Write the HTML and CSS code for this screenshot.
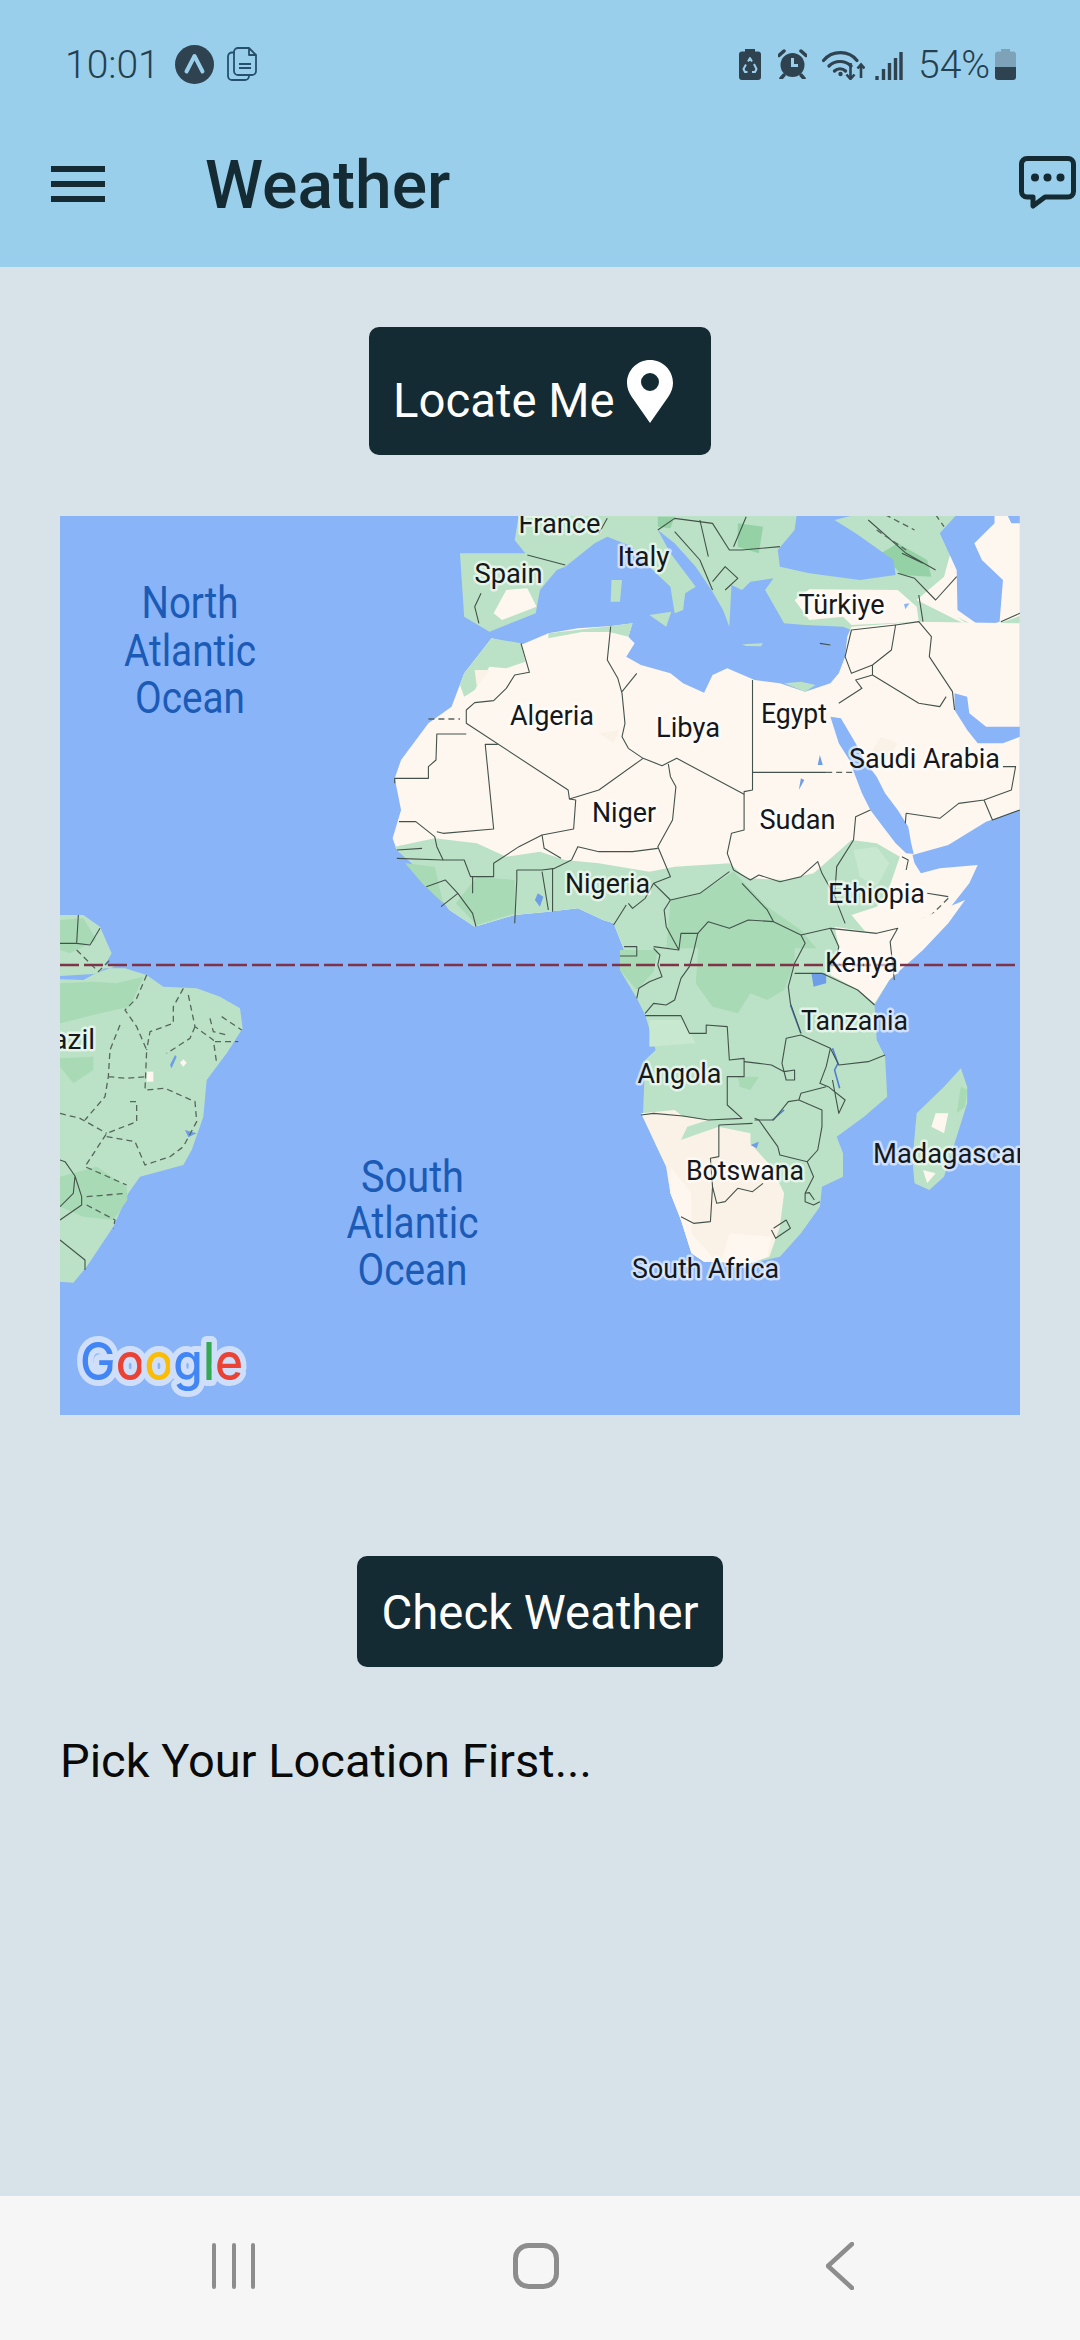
FILE: index.html
```html
<!DOCTYPE html>
<html lang="en">
<head>
<meta charset="utf-8">
<title>Weather</title>
<link rel="stylesheet" href="styles.css">
</head>
<body>
<div class="screen">
  <header class="app-header">
    <div class="status">
      <div class="status-left">
        <span class="clock">10:01</span>
        <svg class="ic-expo" viewBox="0 0 39 39"><circle cx="19.5" cy="19.5" r="19.5" class="f-dark"/><path d="M11.5 26.5 19.5 11l8 15.5" class="s-header"/></svg>
        <svg class="ic-doc" viewBox="0 0 30 34"><path d="M8 5.5H5a4 4 0 0 0-4 4V29a4 4 0 0 0 4 4h13a4 4 0 0 0 4-4v-1" class="s-thin"/><path d="M11 1h11l7 7v16a4 4 0 0 1-4 4H11a4 4 0 0 1-4-4V5a4 4 0 0 1 4-4zM22 1v7h7M12 17h12M12 21h12" class="s-thin"/></svg>
      </div>
      <div class="status-right">
        <svg class="ic-recycle" viewBox="0 0 22 31"><path d="M6 0h10v2.500h3a3 3 0 0 1 3 3V28a3 3 0 0 1-3 3H3a3 3 0 0 1-3-3V5.500a3 3 0 0 1 3-3h3z" class="f-dark"/><path d="M9 12.500 11 9l2 3.500M15 15l2.500 5-1.500 3h-3M8.500 23H6l-1.500-3L7 15.500" class="s-recycle"/></svg>
        <svg class="ic-alarm" viewBox="0 0 29 30"><circle cx="14.500" cy="16" r="12" class="f-dark"/><path d="M1 6.500 6 2M28 6.500 23 2M6 26l-3 3.500M23 26l3 3.500" class="s-icon"/><path d="M14.500 9v7.500H20" class="s-hands"/></svg>
        <svg class="ic-wifi" viewBox="0 0 43 31"><path d="M1.500 11.500C10 1 27 1 35 11.500M7 17c6-6 16-6 22 0M12.500 22c3-3 8-3 11 0" class="s-wifi"/><circle cx="18.500" cy="25" r="2.200" class="f-dark"/><path d="M28.500 14v15.500M24.500 25.500l4 4.500 4-4.500M39 29V16M35.500 19.500 39 15.500l3.500 4" class="s-arrow"/></svg>
        <svg class="ic-signal" viewBox="0 0 28 28"><path d="M2 28v-4M8.500 28V17M14.500 28V11M20.500 28V6M26 28V0" class="s-signal"/></svg>
        <span class="battery-pct">54%</span>
        <svg class="ic-battery" viewBox="0 0 21 31"><path d="M6 0h9v2.500h3a3 3 0 0 1 3 3V18H0V5.500a3 3 0 0 1 3-3h3z" class="f-batt-empty"/><path d="M0 18h21v10a3 3 0 0 1-3 3H3a3 3 0 0 1-3-3z" class="f-dark"/></svg>
      </div>
    </div>
    <div class="title-row">
      <div class="burger"><span></span><span></span><span></span></div>
      <h1 class="title">Weather</h1>
      <svg class="ic-chat" viewBox="0 0 57 56"><path d="M8 2.500H49A5.500 5.500 0 0 1 54.500 8V35.500A5.500 5.500 0 0 1 49 41H26L14 50V41H8A5.500 5.500 0 0 1 2.500 35.500V8A5.500 5.500 0 0 1 8 2.500z" class="s-chat"/><circle cx="16" cy="21.500" r="4" class="f-ink"/><circle cx="28.500" cy="21.500" r="4" class="f-ink"/><circle cx="41.500" cy="21.500" r="4" class="f-ink"/></svg>
    </div>
  </header>

  <main class="content">
    <button class="btn btn-locate">
      <span class="btn-locate-text">Locate Me</span>
      <svg class="ic-pin" viewBox="0 0 46 63"><path fill-rule="evenodd" d="M23 0C10.300 0 0 10.300 0 23c0 5 2 9.500 4.500 13.500L23 63l18.500-26.500C44 32.500 46 28 46 23 46 10.300 35.700 0 23 0zm0 13a9 9 0 1 1 0 18 9 9 0 0 1 0-18z" class="f-white"/></svg>
    </button>

    <svg class="map" viewBox="60 516 960 899">
      <rect x="60" y="516" width="960" height="899" class="m-ocean"/>

      <g transform="matrix(.42092 0 0 .33333 380 510)">
        <path class="m-green" d="M330,14 L1520,14 L1520,340 L1280,340 L1120,360 L1100,350 L1010,345 L960,340 L915,240 L935,205 L880,215 L860,240 L835,225 L830,350 L815,300 L790,245 L750,170 L700,100 L660,60 L690,130 L750,230 L725,250 L720,300 L700,310 L690,230 L640,170 L600,110 L540,80 L510,100 L440,170 L420,180 L380,240 L370,310 L260,365 L200,320 L190,130 L345,130 L320,90Z"/>
        <path class="m-beige" d="M300,240 L350,235 L372,290 L290,330 L270,310Z"/>
        <path class="m-beige" d="M985,270 L1020,238 L1230,240 L1275,290 L1280,335 L1120,345 L1100,320 L1020,330Z"/>
        <path class="m-beige" d="M1275,270 L1340,200 L1380,14 L1520,14 L1520,340 L1440,370 L1370,330Z"/>
        <path class="m-green" d="M1370,320 L1430,358 L1520,318 L1520,340 L1440,378Z"/>
        <path class="m-dark" d="M1190,130 L1230,100 L1300,150 L1310,200 L1240,195Z"/>
        <path class="m-dark" d="M660,20 L700,20 L690,55 L660,50Z"/>
        <path class="m-dark" d="M850,40 L910,50 L900,130 L850,110Z"/>
        <path class="m-ocean" d="M990,14 L1130,14 L1080,30 L1130,70 L1220,150 L1225,195 L1140,210 L1020,190 L950,170 L945,120 L985,60Z"/>
        <path class="m-ocean" d="M1370,14 L1330,70 L1370,180 L1372,300 L1430,352 L1472,335 L1480,210 L1430,150 L1412,100 L1460,40 L1460,14Z"/>
        <path class="m-ocean" d="M1490,14 L1520,14 L1520,40 L1500,40Z"/>
        <path class="m-green" d="M640,315 L692,305 L680,350Z"/>
        <path class="m-green" d="M550,210 L575,210 L570,275 L548,275Z"/>
        <path class="m-green" d="M860,403 L910,400 L905,409 L870,408Z"/>

        <path class="m-beige" d="M265,385 L300,395 L340,402 L400,370 L470,355 L550,348 L600,340 L590,380 L605,400 L585,440 L620,465 L690,490 L720,520 L770,548 L790,495 L825,475 L890,510 L950,520 L1010,545 L1070,520 L1090,490 L1105,440 L1110,380 L1120,350 L1280,335 L1520,340 L1520,900 L1440,935 L1350,1005 L1265,1035 L1270,1060 L1285,1090 L1330,1075 L1420,1065 L1400,1120 L1350,1200 L1290,1260 L1270,1320 L580,1320 L555,1240 L530,1230 L470,1195 L400,1205 L320,1215 L225,1250 L165,1200 L130,1140 L90,1075 L40,1020 L30,985 L50,900 L35,805 L50,750 L115,640 L170,590 L200,490Z"/>
        <path class="m-ocean" d="M1365,550 L1395,560 L1400,610 L1440,650 L1520,650 L1520,680 L1480,700 L1420,700 L1395,660 L1365,600Z"/>
        <path class="m-ocean" d="M1070,620 L1095,625 L1130,700 L1150,750 L1180,800 L1200,850 L1230,900 L1255,950 L1262,1000 L1268,1032 L1250,1030 L1225,1000 L1195,950 L1165,900 L1145,850 L1130,800 L1115,750 L1090,700Z"/>
        <path class="m-green" d="M200,490 L265,385 L335,400 L345,455 L300,475 L260,470 L225,540 L200,560 L190,525Z"/>
        <path class="m-green" d="M400,370 L550,348 L600,340 L590,380 L545,366 L480,366 L400,385Z"/>
        <path class="m-green" d="M960,520 L1010,545 L1035,525 L1000,515Z"/>
        <path class="m-green" d="M35,1010 L130,985 L230,1000 L300,1040 L380,1025 L440,1050 L520,1060 L640,1085 L700,1070 L830,1060 L870,1105 L960,1110 L1030,1090 L1075,1040 L1120,990 L1180,1000 L1235,1040 L1205,1150 L1180,1190 L1120,1215 L1150,1260 L1200,1320 L580,1320 L555,1240 L530,1230 L470,1195 L400,1205 L320,1215 L225,1250 L165,1200 L130,1140 L90,1075 L40,1020Z"/>
        <path class="m-mid" d="M690,1170 L760,1150 L840,1085 L920,1190 L1000,1260 L1040,1320 L680,1320Z"/>
        <path class="m-mid" d="M230,1100 L320,1110 L320,1210 L230,1245 L180,1180Z"/>
        <path class="m-mid" d="M60,1060 L130,1070 L150,1180 L100,1120Z"/>
        <path class="m-pale" d="M1125,1020 L1180,1010 L1210,1060 L1180,1130 L1140,1100Z"/>
        <path class="m-sand" d="M225,480 L260,480 L230,530Z"/>
        <path class="m-sand" d="M520,670 L570,660 L555,700Z"/>
        <path class="m-sand" d="M1190,680 L1230,700 L1200,760 L1170,720Z"/>
        <path class="m-lake" d="M375,1150 L388,1160 L380,1190 L368,1170Z"/>
        <path class="m-lake" d="M1045,735 L1052,765 L1040,765Z"/>
        <path class="m-lake" d="M1000,805 L1008,810 L995,840Z"/>
        <path class="m-ocean" d="M1245,282 L1258,280 L1248,298Z"/>

        <g class="m-borders">
          <path d="M335,400 355,487 320,495 300,535 270,572 225,578 205,600 205,640 447,840 450,867 520,840 625,745"/>
          <path d="M548,350 540,450 565,505 575,550 582,640 575,680 590,715 625,745 670,767 705,745 865,853"/>
          <path d="M575,545 610,490 M885,510 885,840 865,845 865,960 835,970 825,1030 840,1080"/>
          <path d="M885,787 1060,787"/>
          <path d="M685,762 690,800 703,830 695,930 660,1010 690,1100 650,1120 690,1170"/>
          <path d="M660,1015 600,1025 520,1025 470,1010 455,1050"/>
          <path d="M450,867 465,870 460,957 385,975 390,1015 430,1045"/>
          <path d="M280,703 250,703 270,957 150,970 135,965"/>
          <path d="M205,672 135,672 133,750 115,770 115,805 35,805 35,820"/>
          <path d="M45,935 85,935 130,980 135,1010 150,1050 200,1050 215,1100 270,1100 270,1060 330,1010 385,975"/>
          <path d="M40,1020 100,1015 M40,1045 150,1050"/>
          <path d="M325,1080 325,1110 320,1240 M325,1080 385,1080 415,1075 455,1050"/>
          <path d="M385,1085 400,1200 M410,1075 410,1205"/>
          <path d="M110,1130 155,1110 185,1150 145,1190 M185,1150 220,1210 228,1250 M220,1100 220,1150"/>
          <path d="M840,1080 880,1110 900,1095 950,1115 1000,1100 1040,1055 1050,1090 1085,1170"/>
          <path d="M1165,900 1130,920 1125,990 1085,1070 1080,1160 1105,1240"/>
          <path d="M690,1170 760,1150 830,1085 M860,1120 920,1200 935,1235"/>
          <path d="M590,1180 600,1195 630,1165 650,1120"/>
          <path d="M1090,580 1145,535 1130,510 1170,495 1170,465 1120,490 1105,440 1120,360 1225,345 1215,420 1170,465"/>
          <path d="M1225,345 1280,335 1310,380 1305,440 1360,545 1365,600 M1170,495 1280,580 1330,590 1345,560"/>
          <path d="M1250,910 1330,925 1375,880 1435,870 1500,840 1510,770 1480,770 M1435,870 1455,930 1520,900 M1250,910 1248,940"/>
          <path d="M1280,255 1290,335 M1370,200 1320,270 1270,205 1230,190 M1475,335 1520,310"/>
          <path d="M240,250 225,290 235,340 M350,135 440,165 M520,70 540,25"/>
          <path d="M660,60 700,25 790,40 830,120 860,120 950,110 M700,65 760,150 790,240 M790,215 820,170 850,205 820,240"/>
          <path d="M760,30 780,140 M870,20 840,110 M1160,30 1250,130 1320,180 M1240,130 1290,160"/>
          <path d="M1240,1040 1255,1050 1250,1080 M1350,1160 1300,1150"/>
          <path d="M1045,400 1070,405"/>
        </g>
        <g class="m-borders-dash">
          <path d="M115,627 190,627 M1060,787 1130,787"/>
          <path d="M1350,1165 1310,1215 1250,1250 1230,1270"/>
          <path d="M1180,60 1250,120 M1320,14 1340,50 M1200,14 1270,60"/>
        </g>
      </g>

      <g transform="matrix(.42092 0 0 .33333 380 900)">
        <path class="m-green" d="M580,145 L570,210 L610,295 L630,345 L655,450 L630,480 L625,640 L650,720 L680,800 L690,880 L715,960 L740,1060 L770,1085 L880,1090 L950,1070 L1000,1000 L1045,920 L1050,860 L1100,830 L1100,760 L1085,710 L1150,650 L1205,590 L1200,470 L1180,420 L1175,315 L1210,240 L1250,170 L1275,145Z"/>
        <path class="m-beige" d="M1080,80 L1180,100 L1230,85 L1390,0 L1350,70 L1290,150 L1210,240 L1175,310 L1130,265 L1070,225 L1090,140Z"/>
        <path class="m-sand" d="M620,640 L700,630 L720,650 L780,660 L730,680 L715,720 L760,700 L805,680 L880,700 L880,730 L930,800 L960,880 L950,980 L925,1070 L880,1090 L770,1085 L740,1060 L715,960 L690,880 L680,800 L650,720Z"/>
        <path class="m-beige" d="M690,800 L740,880 L740,1000 L800,1085 L770,1085 L740,1060 L715,960 L690,880Z"/>
        <path class="m-beige" d="M830,1000 L930,1010 L920,1070 L880,1090 L810,1085Z"/>
        <path class="m-mid" d="M760,90 L880,65 L985,110 L985,190 L960,270 L920,300 L880,280 L850,340 L790,320 L750,250Z"/>
        <path class="m-mid" d="M570,150 L660,150 L650,215 L610,270 L570,210Z"/>
        <path class="m-mid" d="M850,530 L900,530 L880,570 L855,560Z"/>
        <path class="m-pale" d="M640,360 L720,360 L750,430 L640,440Z"/>
        <path class="m-green" d="M1380,505 L1395,560 L1395,610 L1340,830 L1305,870 L1270,850 L1265,780 L1275,640 L1340,560Z"/>
        <path class="m-mid" d="M1380,560 L1395,570 L1390,620 L1370,640Z"/>
        <path class="m-beige" d="M1320,640 L1350,640 L1340,700 L1310,680Z"/>
        <path class="m-beige" d="M1290,810 L1320,820 L1300,850Z"/>
        <path class="m-lake" d="M1025,220 L1060,220 L1060,250 L1030,260Z"/>
        <path class="m-lake" d="M880,735 L900,725 L895,745Z"/>
        <path class="m-lake-line" d="M975,315 1000,400 M1075,445 1088,490 1080,510 1092,565 M932,660 960,630"/>
        <g class="m-borders">
          <path d="M555,75 585,15 M690,0 675,30 680,80 710,150 715,100 755,100 745,155 735,200 715,235 700,300 680,315 650,310 630,340"/>
          <path d="M580,140 610,140 610,168 570,168 M650,140 710,150 M650,145 665,165 660,195 670,230 640,245 615,265 610,295"/>
          <path d="M675,30 M755,100 780,65 830,85 875,60 935,65 1000,105 1070,85 1090,140 1085,170"/>
          <path d="M1000,105 1010,130 985,190 970,260 975,310 1000,400 M985,220 1050,220 1135,270 1175,315"/>
          <path d="M1070,85 1180,100 1230,85 1212,125 1222,240"/>
          <path d="M630,347 715,347 735,400 775,400 775,375 825,380 830,480 865,475 865,530 825,530 825,615 860,655 780,660 720,648 650,640 620,645"/>
          <path d="M865,485 900,490 930,495 960,515 985,510 985,540 965,540 955,490 965,415 1000,405 1070,445 1090,495 1160,485 1200,465"/>
          <path d="M1070,445 1060,500 1045,550 1065,560 1105,600 1090,640 1075,540"/>
          <path d="M1060,560 1000,580 995,600 1050,630 1050,680 1040,750 1015,785 950,765 945,740 900,660 890,655"/>
          <path d="M995,600 970,605 935,660 890,660 M805,675 885,670 M805,675 805,770 785,775 790,860 800,910 820,905 850,865 885,875 910,850"/>
          <path d="M790,860 785,965 745,970 715,950 M1015,785 1030,830 1010,880 1010,905 1030,915 1045,905 M1010,880 1020,878 1032,900"/>
          <path d="M935,985 965,960 975,985 940,1015 930,990"/>
        </g>
      </g>

      <g transform="matrix(.33333 0 0 .33333 50 900)">
        <path class="m-green" d="M30,45 L100,45 L150,80 L185,160 L165,195 L225,205 L290,225 L340,260 L440,265 L510,290 L570,325 L578,385 L530,460 L470,540 L460,650 L425,750 L400,795 L270,830 L235,880 L190,980 L110,1100 L70,1148 L30,1145Z"/>
        <path class="m-ocean" d="M30,238 L100,240 L165,205 L225,205 L200,198 L130,222 L30,228Z"/>
        <path class="m-mid" d="M30,250 L130,245 L200,250 L280,230 L240,320 L150,340 L30,370Z"/>
        <path class="m-mid" d="M30,60 L100,55 L140,120 L60,160 L30,150Z"/>
        <path class="m-mid" d="M30,475 L130,470 L130,510 L70,550 L30,500Z"/>
        <path class="m-mid" d="M30,830 L140,800 L230,860 L232,900 L190,960 L100,950 L30,920Z"/>
        <path class="m-lake" d="M375,465 L380,470 L365,505 L360,495Z"/>
        <path class="m-lake" d="M405,690 L440,700 L415,712Z"/>
        <path class="m-beige" d="M400,478 L410,488 L400,500 L390,488Z"/>
        <path class="m-beige" d="M290,515 L310,515 L310,545 L290,545Z"/>
        <g class="m-borders">
          <path d="M30,780 45,785 75,828 95,890 95,915 30,960 M75,828 70,880 30,920 M30,1020 105,1080 105,1110"/>
          <path d="M85,45 80,130 30,130 M120,135 150,85 M80,130 120,135"/>
        </g>
        <g class="m-borders-dash">
          <path d="M290,225 260,295 225,330 260,380 290,450 285,570 345,565 435,605 440,665 400,740"/>
          <path d="M210,375 180,450 175,530 165,590 105,660 M175,530 230,535 290,530"/>
          <path d="M400,265 370,320 370,370 300,395 290,450 M415,285 435,380 490,420 500,490"/>
          <path d="M435,380 420,415 350,460 M495,425 565,425 M480,355 490,395 530,405 M515,350 575,390"/>
          <path d="M240,605 260,605 260,665 170,700 105,800 230,855 M170,710 255,725 285,795 360,770 400,740"/>
          <path d="M30,640 90,655 170,700 M110,890 230,880 M110,915 195,960 190,985 M80,150 145,215 185,175"/>
        </g>
      </g>

      <path d="M60 965H1020" class="m-equator"/>

      <text class="lbl-ocean" x="190" y="618" textLength="97" lengthAdjust="spacingAndGlyphs">North</text>
      <text class="lbl-ocean" x="190" y="666" textLength="132" lengthAdjust="spacingAndGlyphs">Atlantic</text>
      <text class="lbl-ocean" x="190" y="713" textLength="110" lengthAdjust="spacingAndGlyphs">Ocean</text>
      <text class="lbl-ocean" x="412.500" y="1192" textLength="103" lengthAdjust="spacingAndGlyphs">South</text>
      <text class="lbl-ocean" x="412.500" y="1238" textLength="132" lengthAdjust="spacingAndGlyphs">Atlantic</text>
      <text class="lbl-ocean" x="412.500" y="1285" textLength="110" lengthAdjust="spacingAndGlyphs">Ocean</text>

      <text class="lbl" x="518.500" y="533" textLength="82" lengthAdjust="spacingAndGlyphs">France</text>
      <text class="lbl" x="617.500" y="566" textLength="52" lengthAdjust="spacingAndGlyphs">Italy</text>
      <text class="lbl" x="474.500" y="583" textLength="68" lengthAdjust="spacingAndGlyphs">Spain</text>
      <text class="lbl" x="798.500" y="614" textLength="86" lengthAdjust="spacingAndGlyphs">Türkiye</text>
      <text class="lbl" x="510" y="725" textLength="84" lengthAdjust="spacingAndGlyphs">Algeria</text>
      <text class="lbl" x="656" y="737" textLength="64" lengthAdjust="spacingAndGlyphs">Libya</text>
      <text class="lbl" x="761" y="723" textLength="66" lengthAdjust="spacingAndGlyphs">Egypt</text>
      <text class="lbl" x="849" y="768" textLength="151" lengthAdjust="spacingAndGlyphs">Saudi Arabia</text>
      <text class="lbl" x="592" y="822" textLength="64" lengthAdjust="spacingAndGlyphs">Niger</text>
      <text class="lbl" x="759.500" y="829" textLength="76" lengthAdjust="spacingAndGlyphs">Sudan</text>
      <text class="lbl" x="565" y="893" textLength="85" lengthAdjust="spacingAndGlyphs">Nigeria</text>
      <text class="lbl" x="828" y="903" textLength="97" lengthAdjust="spacingAndGlyphs">Ethiopia</text>
      <text class="lbl" x="825" y="972" textLength="73" lengthAdjust="spacingAndGlyphs">Kenya</text>
      <text class="lbl" x="801" y="1030" textLength="107" lengthAdjust="spacingAndGlyphs">Tanzania</text>
      <text class="lbl" x="637.500" y="1083" textLength="84" lengthAdjust="spacingAndGlyphs">Angola</text>
      <text class="lbl" x="873" y="1163" textLength="152" lengthAdjust="spacingAndGlyphs">Madagascar</text>
      <text class="lbl" x="686" y="1180" textLength="118" lengthAdjust="spacingAndGlyphs">Botswana</text>
      <text class="lbl" x="632" y="1278" textLength="147" lengthAdjust="spacingAndGlyphs">South Africa</text>
      <text class="lbl" x="26" y="1049" textLength="69" lengthAdjust="spacingAndGlyphs">Brazil</text>

      <text class="google" x="80" y="1380" textLength="163" lengthAdjust="spacingAndGlyphs"><tspan class="g-blue">G</tspan><tspan class="g-red">o</tspan><tspan class="g-yellow">o</tspan><tspan class="g-blue">g</tspan><tspan class="g-green">l</tspan><tspan class="g-red">e</tspan></text>
    </svg>

    <button class="btn btn-weather">Check Weather</button>
    <p class="hint">Pick Your Location First...</p>
  </main>

  <nav class="navbar">
    <svg class="ic-recents" viewBox="0 0 44 46"><path d="M2 2V44M22 2V44M41 2V44" class="s-nav"/></svg>
    <svg class="ic-home" viewBox="0 0 46 46"><rect x="2.500" y="2.500" width="41" height="41" rx="13" class="s-nav-home"/></svg>
    <svg class="ic-back" viewBox="0 0 28 48"><path d="M26 2 2 24 26 46" class="s-nav-back"/></svg>
  </nav>
</div>
</body>
</html>
```
FILE: styles.css
```css
* { box-sizing: border-box; }
html, body { margin: 0; padding: 0; }
body { font-family: Roboto, "Liberation Sans", sans-serif; background: #d8e3e9; }
.screen { width: 1080px; height: 2340px; display: flex; flex-direction: column; overflow: hidden; }

.app-header { background: #9acfec; height: 267px; flex: none; color: #152b34; }
.status { height: 128px; padding: 0 64px 0 65px; display: flex; justify-content: space-between; align-items: center; color: #24404f; }
.status-left, .status-right { display: flex; align-items: center; }
.clock { font-size: 39px; font-weight: 300; line-height: 40px; padding-top: 2px; width: 90px; white-space: nowrap; }
.ic-expo { width: 39px; height: 39px; margin-left: 20px; }
.ic-doc { width: 30px; height: 34px; margin-left: 13px; }
.ic-recycle { width: 22px; height: 31px; }
.ic-alarm { width: 29px; height: 30px; margin-left: 17px; }
.ic-wifi { width: 43px; height: 31px; margin-left: 15px; }
.ic-signal { width: 28px; height: 28px; margin-left: 10px; margin-top: 3px; }
.battery-pct { font-size: 39px; font-weight: 300; line-height: 40px; padding-top: 2px; margin-left: 15px; width: 70px; white-space: nowrap; }
.ic-battery { width: 21px; height: 31px; margin-left: 7px; }

.f-dark { fill: #2f4250; }
.f-ink { fill: #152b34; }
.f-white { fill: #fff; }
.f-batt-empty { fill: #7ea3b9; }
.s-header { fill: none; stroke: #9acfec; stroke-width: 4; stroke-linecap: round; stroke-linejoin: round; }
.s-thin { fill: none; stroke: #24506b; stroke-width: 1.8; stroke-linejoin: round; }
.s-recycle { fill: none; stroke: #9acfec; stroke-width: 2; stroke-linejoin: round; }
.s-icon { fill: none; stroke: #2f4250; stroke-width: 3.500; stroke-linecap: round; }
.s-hands { fill: none; stroke: #9acfec; stroke-width: 3; }
.s-wifi { fill: none; stroke: #2f4250; stroke-width: 3.200; stroke-linecap: round; }
.s-arrow { fill: none; stroke: #2f4250; stroke-width: 2.600; }
.s-signal { fill: none; stroke: #2f4250; stroke-width: 3.400; }
.s-chat { fill: none; stroke: #152b34; stroke-width: 5; stroke-linejoin: round; }

.title-row { height: 112px; padding: 0 4px 0 51px; display: flex; align-items: center; }
.burger { width: 54px; height: 36px; display: flex; flex-direction: column; justify-content: space-between; flex: none; }
.burger span { display: block; height: 6px; background: #152b34; }
.title { margin: 0 0 0 100px; font-size: 66px; font-weight: 500; line-height: 76px; padding-top: 3px; white-space: nowrap; }
.ic-chat { width: 57px; height: 56px; margin-left: auto; }

.content { flex: 1; display: flex; flex-direction: column; align-items: center; padding-top: 60px; background: #d8e3e9; }
.btn { border: 0; border-radius: 10px; background: #152b34; color: #fff; font-family: inherit; font-size: 47.300px; font-weight: 400; }
.btn-locate { width: 342px; height: 128px; padding: 0 38px 0 24px; display: flex; align-items: center; justify-content: space-between; }
.btn-locate-text { margin-top: 20px; white-space: nowrap; }
.ic-pin { width: 46px; height: 63px; }
.map { display: block; width: 960px; height: 899px; margin-top: 61px; flex: none; }
.btn-weather { width: 366px; height: 111px; margin-top: 141px; padding: 2px 0 0; white-space: nowrap; }
.hint { align-self: flex-start; margin: 67px 0 0 60px; font-size: 47px; line-height: 54px; color: #0a0a0a; white-space: nowrap; }

.navbar { height: 144px; flex: none; background: #f6f6f6; position: relative; }
.s-nav { fill: none; stroke: #8d8d8d; stroke-width: 4; stroke-linecap: round; }
.s-nav-home { fill: none; stroke: #8d8d8d; stroke-width: 5; }
.s-nav-back { fill: none; stroke: #8d8d8d; stroke-width: 4.500; stroke-linecap: round; stroke-linejoin: round; }
.ic-recents, .ic-home, .ic-back { position: absolute; top: 47px; }
.ic-recents { left: 212px; width: 44px; height: 46px; }
.ic-home { left: 513px; width: 46px; height: 46px; }
.ic-back { left: 826px; top: 46px; width: 28px; height: 48px; }

.m-ocean { fill: #8ab4f8; }
.m-green { fill: #bbe2c6; }
.m-mid { fill: #a8dab5; }
.m-dark { fill: #94d2a5; }
.m-pale { fill: #c8e8d0; }
.m-beige { fill: #fef7f0; }
.m-sand { fill: #faf2e6; }
.m-lake { fill: #6f9ee8; }
.m-lake-line { fill: none; stroke: #4f7fd6; stroke-width: 1.600; vector-effect: non-scaling-stroke; }
.m-borders path { fill: none; stroke: #43524a; stroke-width: 1.100; stroke-linejoin: round; vector-effect: non-scaling-stroke; }
.m-borders-dash path { fill: none; stroke: #56665c; stroke-width: 1.300; stroke-dasharray: 6 4; vector-effect: non-scaling-stroke; }
.m-equator { fill: none; stroke: #7f3349; stroke-width: 2.400; stroke-dasharray: 19 5; }
.lbl { font-family: Roboto, sans-serif; font-size: 28px; fill: #14181c; stroke: rgba(255,255,255,.62); stroke-width: 5px; paint-order: stroke; stroke-linejoin: round; }
.lbl-ocean { font-family: Roboto, sans-serif; font-size: 44px; fill: #1b5bb6; text-anchor: middle; }
.google { font-family: Inter, Roboto, sans-serif; font-size: 52px; font-weight: 500; stroke: #cfdffa; stroke-width: 12px; paint-order: stroke; stroke-linejoin: round; }
.g-blue { fill: #4285f4; }
.g-red { fill: #ea4335; }
.g-yellow { fill: #fbbc05; }
.g-green { fill: #34a853; }
```
